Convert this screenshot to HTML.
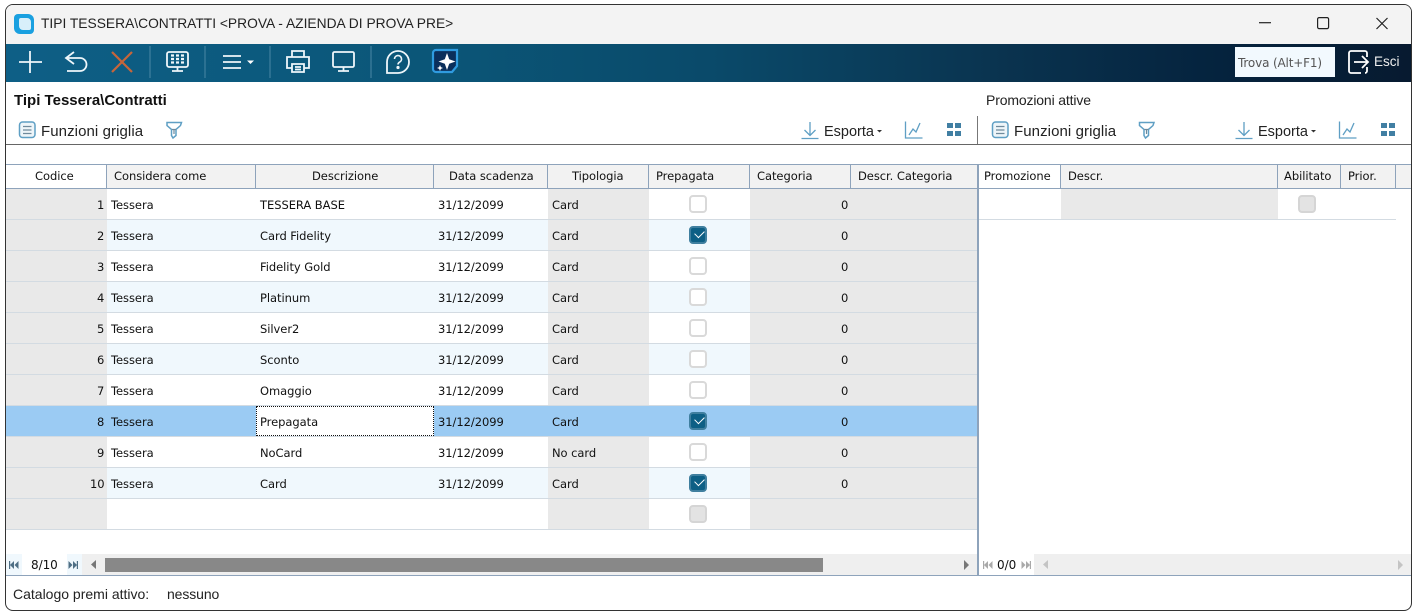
<!DOCTYPE html>
<html><head><meta charset="utf-8"><style>
*{box-sizing:border-box}
html,body{margin:0;padding:0;width:1416px;height:613px;overflow:hidden;background:#fff}
body{font-family:"Liberation Sans",sans-serif;color:#111;position:relative}
.a{position:absolute}
.t{position:absolute;white-space:nowrap;line-height:16px}
.g{font-family:"DejaVu Sans",sans-serif;font-size:11.5px;letter-spacing:-.05px;color:#111}
.f{font-size:14.5px;color:#222}
.fg{font-size:15px;letter-spacing:.08px;color:#222}
.bg{position:absolute;background:#e9e9e9}
.hl{position:absolute;height:1px;background:#d3dbe2}
.hv{position:absolute;top:165px;height:23px;width:1px;background:#8ea3bb}
.cb{position:absolute;width:18px;height:18px;border:2px solid #d9d9d9;border-radius:4px;background:#fff}
.cb.c{background:#0d5f85;border-color:#3f7f9f}
.cb.c:after{content:"";position:absolute;left:3.5px;top:1.5px;width:8px;height:5px;border-left:1.8px solid #fff;border-bottom:1.8px solid #fff;transform:rotate(-45deg)}
.cb.d{background:#e3e3e3;border-color:#d5d5d5}
svg{position:absolute;overflow:visible}
</style></head><body>
<!-- window -->
<div class="a" style="left:5px;top:4px;width:1407px;height:607px;border:1px solid #333;border-radius:8px;background:#fff;overflow:hidden">
<div class="a" style="left:0;top:0;width:100%;height:39px;background:#f3f3f3"></div>
<div class="a" style="left:0;top:39px;width:100%;height:38px;background:linear-gradient(90deg,#0e5f86 0%,#0b5678 30%,#0a4a6a 50%,#0a3450 70%,#05243f 85%,#071a30 100%)"></div>
</div>
<!-- title -->
<div class="a" style="left:14px;top:14px;width:20px;height:20px;background:#1aa0e0;border-radius:4px 6px 4px 6px"></div>
<div class="a" style="left:19px;top:18px;width:12px;height:12px;background:#d8effa;border-radius:2px 4px 2px 4px"></div>
<div class="t" style="left:41px;top:16px;font-size:13.8px;color:#222">TIPI TESSERA\CONTRATTI &lt;PROVA - AZIENDA DI PROVA PRE&gt;</div>
<svg style="left:0;top:0" width="1416" height="613" fill="none" stroke="#222" stroke-width="1.200">
<path d="M1259 22.700h12"/>
<rect x="1317.600" y="17.600" width="11" height="11" rx="1.500"/>
<path d="M1376.500 18l11 11M1387.500 18l-11 11"/>
</svg>
<!-- toolbar icons -->
<svg style="left:0;top:0" width="1416" height="90" fill="none" stroke="#eef6fa" stroke-width="1.800">
<path d="M30 51v22M19 62h23"/>
<path d="M74 52l-8 6 8 6M66 58h14a6.500 6.500 0 0 1 0 13H67"/>
<path d="M112 52l20 20M132 52l-20 20" stroke="#c8653a" stroke-width="2.200"/>
<path d="M150 46v32M205 46v32M270 46v32M371 46v32" stroke="#4a87a5" stroke-width="1"/>
<rect x="167" y="52" width="21" height="15" rx="2"/><path d="M172 71h11M177.500 67v4"/>
<path d="M171 55.500h3M176 55.500h3M181 55.500h3M171 59h3M176 59h3M181 59h3M171 62.500h3M176 62.500h3M181 62.500h3" stroke-width="2.200"/>
<path d="M223 56h18M223 62h18M223 68h18"/>
<path d="M247 60.500h7l-3.500 3.500z" fill="#fff" stroke="none"/>
<path d="M292 57v-6h12v6M292 68h-5v-11h22v11h-5M292 64h12v8h-12zM295 67h6M295 69.500h6"/>
<rect x="333" y="52" width="21" height="15" rx="1.500"/><path d="M338 71h11M343.500 67v4"/>
<path d="M398 51a11 11 0 0 1 0 22h-11v-11a11 11 0 0 1 11-11z"/>
<path d="M394.500 59a3.500 3.500 0 1 1 5 3.200c-1 .6-1.500 1.200-1.500 2.300" stroke-width="1.600"/><circle cx="398" cy="67.500" r=".7" fill="#fff"/>
<path d="M433 53a3 3 0 0 1 3-3h21v16l-5 6h-16a3 3 0 0 1-3-3z" fill="#0b2f5c" stroke="#2f9be0" stroke-width="2.200"/>
<path d="M447 53l2.200 6.300 6.300 2.200-6.300 2.200-2.200 6.300-2.200-6.300-6.300-2.200 6.300-2.200z" fill="#fff" stroke="none"/>
<path d="M440 65l.9 2.100 2.100.9-2.100.9-.9 2.100-.9-2.100-2.100-.9 2.100-.9z" fill="#fff" stroke="none"/>
<path d="M1361 73h-10a2 2 0 0 1-2-2V53a2 2 0 0 1 2-2h14a2 2 0 0 1 2 2v4M1367 67v4a2 2 0 0 1-2 2M1354 62h14M1362 56l6 6-6 6" stroke="#fff"/>
</svg>
<div class="a" style="left:1235px;top:47px;width:100px;height:30px;background:#f2f9fe"></div>
<div class="t" style="left:1238px;top:55px;font-family:'DejaVu Sans',sans-serif;font-size:12px;letter-spacing:-.15px;color:#555">Trova (Alt+F1)</div>
<div class="t" style="left:1374px;top:54px;font-size:13.5px;color:#eee">Esci</div>

<!-- section titles -->
<div class="t" style="left:14px;top:93px;font-size:15px;font-weight:bold;color:#111">Tipi Tessera\Contratti</div>
<div class="t" style="left:986px;top:92px;font-size:14px;letter-spacing:-.15px;color:#222">Promozioni attive</div>

<!-- grid toolbar -->
<div class="t fg" style="left:41px;top:124px">Funzioni griglia</div>
<div class="t fg" style="left:1014px;top:124px">Funzioni griglia</div>
<div class="t f" style="left:824px;top:124px">Esporta</div>
<div class="t f" style="left:1258px;top:124px">Esporta</div>
<svg style="left:0;top:110px" width="1416" height="40" fill="none" stroke="#5f9fc4" stroke-width="1.500">
<rect x="19.500" y="12" width="15.500" height="15.500" rx="3" fill="#eef5f9"/><path d="M23 16.500h8.500M23 20h8.500M23 23.500h8.500" stroke="#6f8a9c" stroke-width="1.200"/>
<rect x="992.500" y="12" width="15.500" height="15.500" rx="3" fill="#eef5f9"/><path d="M996 16.500h8.500M996 20h8.500M996 23.500h8.500" stroke="#6f8a9c" stroke-width="1.200"/>
<path d="M167 12.500h14.500l-1 3-4.500 4v6l-3 2.500-1.500-2.500v-6l-4.500-4z"/><path d="M172 19.500h4M174 19.500v4.500" stroke="#6f8a9c" stroke-width="1.200"/>
<path d="M1139.500 12.500h14.500l-1 3-4.500 4v6l-3 2.500-1.500-2.500v-6l-4.500-4z"/><path d="M1144.500 19.500h4M1146.500 19.500v4.500" stroke="#6f8a9c" stroke-width="1.200"/>
<path d="M810 12v13M804.500 20l5.500 5.500 5.500-5.500M801.500 28.500h17" stroke-width="1.300"/>
<path d="M1244 12v13M1238.500 20l5.500 5.500 5.500-5.500M1235.500 28.500h17" stroke-width="1.300"/>
<path d="M905.500 11.500v16.500h17M909 25l4-6 3 3 4-9" stroke-width="1.300"/>
<path d="M1339.500 11.500v16.500h17M1343 25l4-6 3 3 4-9" stroke-width="1.300"/>
<path d="M947 13h6v5h-6zM955 13h6v5h-6zM947 21h6v5h-6zM955 21h6v5h-6z" fill="#417fa3" stroke="none"/>
<path d="M1381 13h6v5h-6zM1389 13h6v5h-6zM1381 21h6v5h-6zM1389 21h6v5h-6z" fill="#417fa3" stroke="none"/>
<path d="M877 20h5l-2.500 2.500z" fill="#333" stroke="none"/>
<path d="M1311 20h5l-2.500 2.500z" fill="#333" stroke="none"/>
</svg>
<div class="a" style="left:977px;top:116px;width:1px;height:28px;background:#777"></div>
<div class="a" style="left:6px;top:144px;width:1405px;height:1px;background:#666"></div>

<!-- header -->
<div class="a" style="left:6px;top:164px;width:1405px;height:1px;background:#8ea3bb"></div>
<div class="a" style="left:6px;top:188px;width:1405px;height:1px;background:#8ea3bb"></div>
<div class="a" style="left:107px;top:165px;width:870px;height:23px;background:#f2f2f2"></div>
<div class="a" style="left:1061px;top:165px;width:350px;height:23px;background:#f2f2f2"></div>

<!-- row tint -->
<div class="a" style="left:107px;top:220px;width:870px;height:30px;background:#f0f8fd"></div>
<div class="a" style="left:107px;top:282px;width:870px;height:30px;background:#f0f8fd"></div>
<div class="a" style="left:107px;top:344px;width:870px;height:30px;background:#f0f8fd"></div>
<div class="a" style="left:107px;top:468px;width:870px;height:30px;background:#f0f8fd"></div>
<!-- gray columns -->
<div class="bg" style="left:6px;top:189px;width:101px;height:340px"></div>
<div class="bg" style="left:548px;top:189px;width:101px;height:340px"></div>
<div class="bg" style="left:750px;top:189px;width:227px;height:340px"></div>
<div class="bg" style="left:1061px;top:189px;width:217px;height:30px"></div>
<!-- selected row -->
<div class="a" style="left:6px;top:406px;width:971px;height:30px;background:#9bcbf3"></div>
<div class="a" style="left:256px;top:406px;width:178px;height:30px;background:#fff;border:1px dotted #111"></div>
<!-- row lines -->
<div class="hl" style="left:6px;top:219px;width:971px"></div><div class="hl" style="left:6px;top:250px;width:971px"></div><div class="hl" style="left:6px;top:281px;width:971px"></div><div class="hl" style="left:6px;top:312px;width:971px"></div><div class="hl" style="left:6px;top:343px;width:971px"></div><div class="hl" style="left:6px;top:374px;width:971px"></div><div class="hl" style="left:6px;top:405px;width:971px"></div><div class="hl" style="left:6px;top:436px;width:971px"></div><div class="hl" style="left:6px;top:467px;width:971px"></div><div class="hl" style="left:6px;top:498px;width:971px"></div><div class="hl" style="left:6px;top:529px;width:971px"></div>
<div class="hl" style="left:979px;top:219px;width:417px"></div>
<!-- header lines -->
<div class="hv" style="left:106px"></div><div class="hv" style="left:255px"></div><div class="hv" style="left:433px"></div><div class="hv" style="left:547px"></div><div class="hv" style="left:648px"></div><div class="hv" style="left:749px"></div><div class="hv" style="left:850px"></div><div class="hv" style="left:1060px"></div><div class="hv" style="left:1277px"></div><div class="hv" style="left:1340px"></div><div class="hv" style="left:1395px"></div>
<div class="a" style="left:977px;top:164px;width:2px;height:412px;background:#8ea3bb"></div>
<!-- header text -->
<div class="t g" style="left:35px;top:168px">Codice</div>
<div class="t g" style="left:114px;top:168px">Considera come</div>
<div class="t g" style="left:312px;top:168px">Descrizione</div>
<div class="t g" style="left:449px;top:168px">Data scadenza</div>
<div class="t g" style="left:572px;top:168px">Tipologia</div>
<div class="t g" style="left:656px;top:168px">Prepagata</div>
<div class="t g" style="left:757px;top:168px">Categoria</div>
<div class="t g" style="left:858px;top:168px">Descr. Categoria</div>
<div class="t g" style="left:984px;top:168px">Promozione</div>
<div class="t g" style="left:1068px;top:168px">Descr.</div>
<div class="t g" style="left:1284px;top:168px">Abilitato</div>
<div class="t g" style="left:1348px;top:168px">Prior.</div>

<!-- rows -->
<div class="t g" style="left:97px;top:197px">1</div><div class="t g" style="left:111px;top:197px">Tessera</div><div class="t g" style="left:260px;top:197px">TESSERA BASE</div><div class="t g" style="left:438px;top:197px">31/12/2099</div><div class="t g" style="left:552px;top:197px">Card</div><div class="t g" style="left:841px;top:197px">0</div><div class="cb" style="left:689px;top:195px"></div>
<div class="t g" style="left:97px;top:228px">2</div><div class="t g" style="left:111px;top:228px">Tessera</div><div class="t g" style="left:260px;top:228px">Card Fidelity</div><div class="t g" style="left:438px;top:228px">31/12/2099</div><div class="t g" style="left:552px;top:228px">Card</div><div class="t g" style="left:841px;top:228px">0</div><div class="cb c" style="left:689px;top:226px"></div>
<div class="t g" style="left:97px;top:259px">3</div><div class="t g" style="left:111px;top:259px">Tessera</div><div class="t g" style="left:260px;top:259px">Fidelity Gold</div><div class="t g" style="left:438px;top:259px">31/12/2099</div><div class="t g" style="left:552px;top:259px">Card</div><div class="t g" style="left:841px;top:259px">0</div><div class="cb" style="left:689px;top:257px"></div>
<div class="t g" style="left:97px;top:290px">4</div><div class="t g" style="left:111px;top:290px">Tessera</div><div class="t g" style="left:260px;top:290px">Platinum</div><div class="t g" style="left:438px;top:290px">31/12/2099</div><div class="t g" style="left:552px;top:290px">Card</div><div class="t g" style="left:841px;top:290px">0</div><div class="cb" style="left:689px;top:288px"></div>
<div class="t g" style="left:97px;top:321px">5</div><div class="t g" style="left:111px;top:321px">Tessera</div><div class="t g" style="left:260px;top:321px">Silver2</div><div class="t g" style="left:438px;top:321px">31/12/2099</div><div class="t g" style="left:552px;top:321px">Card</div><div class="t g" style="left:841px;top:321px">0</div><div class="cb" style="left:689px;top:319px"></div>
<div class="t g" style="left:97px;top:352px">6</div><div class="t g" style="left:111px;top:352px">Tessera</div><div class="t g" style="left:260px;top:352px">Sconto</div><div class="t g" style="left:438px;top:352px">31/12/2099</div><div class="t g" style="left:552px;top:352px">Card</div><div class="t g" style="left:841px;top:352px">0</div><div class="cb" style="left:689px;top:350px"></div>
<div class="t g" style="left:97px;top:383px">7</div><div class="t g" style="left:111px;top:383px">Tessera</div><div class="t g" style="left:260px;top:383px">Omaggio</div><div class="t g" style="left:438px;top:383px">31/12/2099</div><div class="t g" style="left:552px;top:383px">Card</div><div class="t g" style="left:841px;top:383px">0</div><div class="cb" style="left:689px;top:381px"></div>
<div class="t g" style="left:97px;top:414px">8</div><div class="t g" style="left:111px;top:414px">Tessera</div><div class="t g" style="left:260px;top:414px">Prepagata</div><div class="t g" style="left:438px;top:414px">31/12/2099</div><div class="t g" style="left:552px;top:414px">Card</div><div class="t g" style="left:841px;top:414px">0</div><div class="cb c" style="left:689px;top:412px"></div>
<div class="t g" style="left:97px;top:445px">9</div><div class="t g" style="left:111px;top:445px">Tessera</div><div class="t g" style="left:260px;top:445px">NoCard</div><div class="t g" style="left:438px;top:445px">31/12/2099</div><div class="t g" style="left:552px;top:445px">No card</div><div class="t g" style="left:841px;top:445px">0</div><div class="cb" style="left:689px;top:443px"></div>
<div class="t g" style="left:90px;top:476px">10</div><div class="t g" style="left:111px;top:476px">Tessera</div><div class="t g" style="left:260px;top:476px">Card</div><div class="t g" style="left:438px;top:476px">31/12/2099</div><div class="t g" style="left:552px;top:476px">Card</div><div class="t g" style="left:841px;top:476px">0</div><div class="cb c" style="left:689px;top:474px"></div>
<div class="cb d" style="left:689px;top:505px"></div>
<div class="cb d" style="left:1298px;top:195px"></div>

<!-- scrollbars -->
<div class="a" style="left:82px;top:554px;width:895px;height:21px;background:#efefef"></div>
<div class="a" style="left:6px;top:554px;width:16px;height:21px;background:#f0f8fd"></div>
<div class="a" style="left:67px;top:554px;width:15px;height:21px;background:#f0f8fd"></div>
<div class="a" style="left:105px;top:558px;width:718px;height:14px;background:#888"></div>
<div class="a" style="left:1034px;top:554px;width:377px;height:21px;background:#efefef"></div>
<div class="a" style="left:6px;top:575px;width:1405px;height:1px;background:#8ea3bb"></div>
<div class="t g" style="left:31px;top:557px;font-size:12px">8/10</div>
<div class="t g" style="left:997px;top:557px;font-size:12px">0/0</div>
<svg style="left:0;top:550px" width="1416" height="30">
<path d="M9 11h1.200v8H9zM14 11v8l-4-4zM18.500 11v8l-4-4z" fill="#4f6f85"/>
<path d="M78 11h-1.200v8H78zM73 11v8l4-4zM68.500 11v8l4-4z" fill="#4f6f85"/>
<path d="M96 10v9l-5-4.500z" fill="#777"/>
<path d="M964 10v10l5-5z" fill="#777"/>
<path d="M983 11h1.200v8H983zM988 11v8l-4-4zM992.500 11v8l-4-4z" fill="#a9a9a9"/>
<path d="M1031 11h-1.200v8h1.200zM1026 11v8l4-4zM1021.500 11v8l4-4z" fill="#a9a9a9"/>
<path d="M1048 10v9l-5-4.500z" fill="#c4c4c4"/>
<path d="M1398 10v10l5-5z" fill="#c4c4c4"/>
</svg>

<!-- status -->
<div class="t" style="left:13px;top:586px;font-size:14px;color:#222">Catalogo premi attivo:</div>
<div class="t" style="left:167px;top:586px;font-size:14px;letter-spacing:-.1px;color:#222">nessuno</div>
</body></html>
